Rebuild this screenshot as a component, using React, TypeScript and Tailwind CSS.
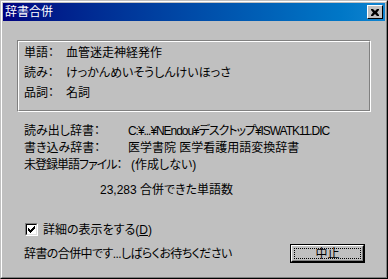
const font = "font-['Liberation_Sans','Noto_Sans_CJK_JP',sans-serif] [font-feature-settings:'palt']";

function Row({ label, value }: { label: string; value: string }) {
  return (
    <div className="flex h-[20px] items-center whitespace-nowrap">
      <span className="w-[42px] shrink-0">{label}</span>
      <span>{value}</span>
    </div>
  );
}

function InfoRow({ label, value, lt, vt }: { label: string; value: string; lt?: string; vt?: string }) {
  return (
    <div className="flex h-[17px] items-center whitespace-nowrap">
      <span className={`w-[104px] shrink-0 ${lt ?? ""}`}>{label}</span>
      <span className={vt ?? ""}>{value}</span>
    </div>
  );
}

export default function App() {
  return (
    <div className={`${font} w-[388px] h-[279px] bg-[#c0c0c0] text-[12px] leading-none text-black`}>
      <div className="h-full w-full border border-t-[#c0c0c0] border-l-[#c0c0c0] border-r-black border-b-black">
        <div className="flex h-full w-full flex-col border border-t-white border-l-white border-r-[#808080] border-b-[#808080] p-px">
          {/* title bar */}
          <div className="flex h-[18px] shrink-0 items-center justify-between bg-gradient-to-r from-[#000080] to-[#1084d0] pl-[2px] pr-[2px]">
            <span className="text-[12px] text-white">辞書合併</span>
            <button className="flex h-[14px] w-[16px] items-center justify-center border border-t-white border-l-white border-r-black border-b-black bg-[#c0c0c0]">
              <svg width="8" height="7" viewBox="0 0 8 7">
                <path d="M0 0h2l2 2 2-2h2v1L6 3.5 8 6v1H6L4 5 2 7H0V6l2-2.5L0 1z" fill="black" />
              </svg>
            </button>
          </div>

          <div className="flex flex-1 flex-col px-[14px] pt-[19px]">
            {/* group box */}
            <div className="border border-t-[#808080] border-l-[#808080] border-r-white border-b-white">
              <div className="h-[70px] border border-t-white border-l-white border-r-[#808080] border-b-[#808080] pl-[5px] pt-[1px]">
                <Row label="単語：" value="血管迷走神経発作" />
                <Row label="読み：" value="けっかんめいそうしんけいほっさ" />
                <Row label="品詞：" value="名詞" />
              </div>
            </div>

            <div className="pl-[7px] pt-[10px]">
              <InfoRow label="読み出し辞書：" value="C:¥...¥NEndou¥デスクトップ¥ISWATK11.DIC" vt="tracking-[-1.05px]" />
              <InfoRow label="書き込み辞書：" value="医学書院 医学看護用語変換辞書" />
              <InfoRow label="未登録単語ファイル：" value="(作成しない)" lt="tracking-[-1px]" vt="pl-[3px]" />
            </div>
            <div className="mt-[8px] flex h-[17px] items-center pl-[83px]">23,283 合併できた単語数</div>

            <div className="mt-[25px] flex h-[13px] items-center pl-[8px]">
              <div className="flex h-[13px] w-[13px] items-center justify-center border border-t-[#808080] border-l-[#808080] border-r-white border-b-white">
                <div className="flex h-[11px] w-[11px] items-center justify-center border border-t-black border-l-black border-r-[#dfdfdf] border-b-[#dfdfdf] bg-white">
                  <svg width="7" height="7" viewBox="0 0 7 7">
                    <path d="M0 2h1v1h1v1h1V3h1V2h1V1h1V0h1v3H6v1H5v1H4v1H3v1H2V6H1V5H0z" fill="black" />
                  </svg>
                </div>
              </div>
              <span className="ml-[5px]">
                詳細の表示をする(<span className="underline">D</span>)
              </span>
            </div>

            <div className="mt-[8px] flex items-center justify-between pl-[7px] pr-[6px]">
              <span className="tracking-[-0.6px]">辞書の合併中です...しばらくお待ちください</span>
              <button className="h-[19px] w-[75px] border border-black bg-[#c0c0c0]">
                <div className="h-full w-full border border-t-white border-l-white border-r-black border-b-black">
                  <div className="flex h-full w-full items-center justify-center border border-transparent border-r-[#808080] border-b-[#808080] p-[1px]">
                    <div className="flex h-full w-full items-center justify-center border border-dotted border-black">
                      中止
                    </div>
                  </div>
                </div>
              </button>
            </div>
          </div>
        </div>
      </div>
    </div>
  );
}
